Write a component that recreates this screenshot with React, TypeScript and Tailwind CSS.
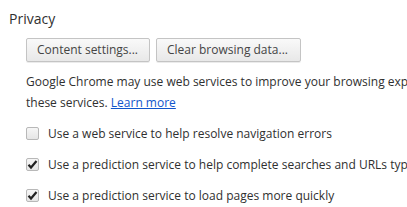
export default function App() {
  const rows = [
    { label: "Use a web service to help resolve navigation errors", checked: false },
    { label: "Use a prediction service to help complete searches and URLs typed in the address bar", checked: true },
    { label: "Use a prediction service to load pages more quickly", checked: true },
  ]

  return (
    <div className="w-[407px] h-[207px] overflow-hidden bg-white text-[#303030] font-['Open_Sans',sans-serif] text-[12px]">
      <div className="pl-[9px] pt-[9px]">
        <h3 className="text-[14px] leading-[20px] font-normal text-[#303030]">Privacy</h3>
      </div>
      <div className="pl-[26px] pt-[9px] whitespace-nowrap">
        <div className="flex gap-[6px]">
          <button className="h-[24px] pl-[10px] pr-[11px] rounded-[2px] border border-[#c4c4c4] bg-gradient-to-b from-[#f9f9f9] to-[#e8e8e8] text-[#444] leading-[22px] shadow-[0_1px_0_rgba(0,0,0,0.08)]">
            Content settings...
          </button>
          <button className="h-[24px] pl-[10px] pr-[12px] rounded-[2px] border border-[#c4c4c4] bg-gradient-to-b from-[#f9f9f9] to-[#e8e8e8] text-[#444] leading-[22px] shadow-[0_1px_0_rgba(0,0,0,0.08)]">
            Clear browsing data...
          </button>
        </div>
        <p className="mt-[9px] leading-[21px]">
          Google Chrome may use web services to improve your browsing experience. You may optionally disable
          <br />
          these services. <a href="#" className="text-[#1155cc] underline">Learn more</a>
        </p>
        <div className="mt-[12px] flex flex-col gap-[14px]">
          {rows.map((r) => (
            <label key={r.label} className="flex items-center gap-[9px] h-[17px]">
              <span className="w-[13px] h-[13px] shrink-0 rounded-[2px] border border-[#b8b8b8] bg-gradient-to-b from-[#f6f6f6] to-[#e6e6e6] flex items-center justify-center">
                {r.checked && (
                  <svg width="11" height="11" viewBox="0 0 11 11">
                    <path d="M1.5 5.8 L4 8.5 L9.5 2" fill="none" stroke="#222" strokeWidth="2.2" />
                  </svg>
                )}
              </span>
              <span>{r.label}</span>
            </label>
          ))}
        </div>
      </div>
    </div>
  )
}
